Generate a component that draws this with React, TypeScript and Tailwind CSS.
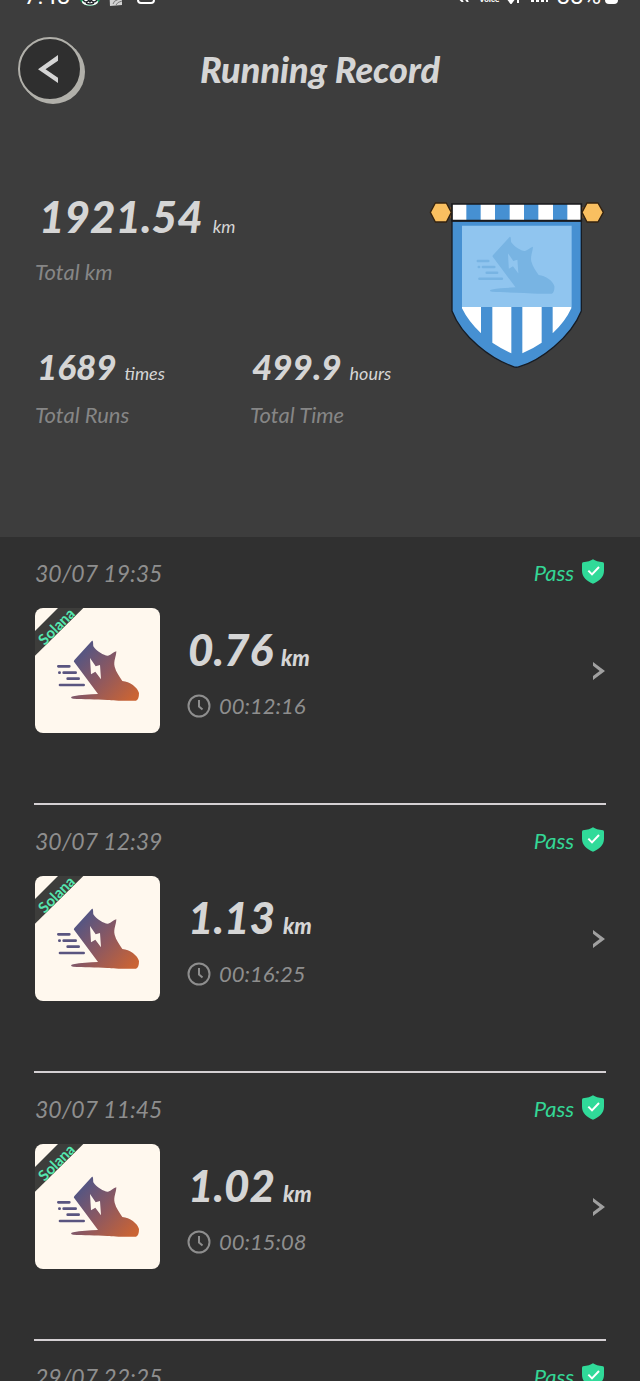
import React from "react";

type Run = { date: string; distance: string; time: string };

const runs: Run[] = [
  { date: "30/07 19:35", distance: "0.76", time: "00:12:16" },
  { date: "30/07 12:39", distance: "1.13", time: "00:16:25" },
  { date: "30/07 11:45", distance: "1.02", time: "00:15:08" },
];

function ShoeShape() {
  return (
    <g>
      <path
        fillRule="evenodd"
        strokeWidth="0"
        d="M171 98C175 97 174 105 175 115C186 131 208 144 219 143C229 141 236 131 244 130C244 145 235 159 239 176C243 192 254 206 262 219C284 221 308 238 312 255C312 268 309 276 303 278C270 279 235 278 217 276C183 274 143 274 115 272C106 271 106 267 115 265C137 259 163 260 189 258L117 161Q115 159 119 155ZM165 150L182 175L195 171L198 214L181 191L168 199Z"
      />
      <path strokeWidth="8" strokeLinecap="round" d="M70 175H103M86 194H122M73 194H74M98 212H131M75 231H146" />
    </g>
  );
}

function ShoeCard({ id }: { id: string }) {
  return (
    <div className="relative h-[125px] w-[125px] shrink-0 overflow-hidden rounded-lg bg-[#fff8ee]">
      <svg viewBox="0 0 375 375" className="h-full w-full" aria-hidden="true">
        <defs>
          <linearGradient id={id} gradientUnits="userSpaceOnUse" x1="125" y1="125" x2="290" y2="275">
            <stop offset="0" stopColor="#4c5588" />
            <stop offset="0.5" stopColor="#8d5860" />
            <stop offset="1" stopColor="#ca6434" />
          </linearGradient>
        </defs>
        <g fill={`url(#${id})`} stroke="#5a5580">
          <ShoeShape />
        </g>
        <path d="M0 69L69 0H145L0 143Z" fill="#3d3d3b" />
      </svg>
      <span className="absolute -left-4 top-1.5 w-[74px] -rotate-45 text-center text-[15px] font-bold not-italic leading-6 text-[#55e8b0]">
        Solana
      </span>
    </div>
  );
}

function Banner() {
  return (
    <svg viewBox="27 39 528 501" className="h-[167px] w-[176px]" role="img" aria-label="Runner pennant">
      <path d="M96 96H484V366C452 446 362 514 298 533Q288 537 278 532C214 510 126 445 96 366Z" fill="#4690d2" stroke="#171c24" strokeWidth="4" />
      <path d="M126 110H455V354H126Z" fill="#90c5ef" />
      <path d="M126 354H183V433Q145 397 126 358ZM217 354H274V493Q244 479 217 461ZM307 354H365V461Q339 479 307 493ZM398 354H454V358Q435 399 398 433Z" fill="#fff" />
      <g transform="translate(107 50) scale(.95)" fill="#78b4e3" stroke="#78b4e3">
        <ShoeShape />
      </g>
      <path d="M90 54H96V88H90ZM484 54H491V88H484Z" fill="#704d25" />
      <path d="M96 45H484V95H96Z" fill="#fff" />
      <path d="M139 45H182V95H139ZM225 45H269V95H225ZM312 45H355V95H312ZM399 45H442V95H399Z" fill="#4690d2" />
      <path d="M96 45H484V95H96Z" fill="none" stroke="#19191b" strokeWidth="5" />
      <path d="M46 42H79L94 70L79 99H46L31 70ZM501 42H534L550 70L534 99H501L486 70Z" fill="#f9bf60" stroke="#33220f" strokeWidth="4" strokeLinejoin="round" />
    </svg>
  );
}

function StatusBar() {
  return (
    <div className="flex h-1.5 items-end justify-between overflow-hidden pl-6 pr-[22px] font-['Roboto'] not-italic text-white" aria-hidden="true">
      <div className="flex items-end">
        <span className="w-[55px] text-2xl leading-5">7:48</span>
        <svg viewBox="0 0 22 22" className="mr-2 h-[22px] w-[22px]">
          <circle cx="11" cy="11" r="11" fill="#1ca765" />
          <ellipse cx="11" cy="18" rx="8" ry="3.5" fill="#fff" />
          <path d="M4 16Q7 20 10 16Q11 20 12 16Q15 20 18 16M7 19Q11 21 15 19" fill="none" stroke="#20252a" strokeWidth="1.4" />
        </svg>
        <svg viewBox="0 0 13 22" className="mr-[15px] h-[22px] w-[13px]">
          <path d="M0 0H13V21L1 22Z" fill="#d2d2d2" />
          <path d="M4 20Q4 17 10 15M7 21Q8 18 13 17" fill="none" stroke="#777" />
        </svg>
        <span className="mb-0.5 h-5 w-[18px] rounded-sm border-2 border-white" />
      </div>
      <div className="flex items-end">
        <svg viewBox="0 0 10 20" className="mb-1 mr-2.5 h-5 w-2.5" fill="none" stroke="#fff" strokeWidth="2">
          <path d="M5 14L0 16L4 20M10 14L6 16L9 20" />
        </svg>
        <span className="mr-2 text-[8px] font-bold leading-3">Voice</span>
        <svg viewBox="0 0 14 20" className="mb-0.5 mr-2.5 h-5 w-3.5" fill="none" stroke="#fff" strokeWidth="2">
          <path d="M4 5V18M1 15L4 19L7 15M11 5V19" />
        </svg>
        <svg viewBox="0 0 17 20" className="mb-1 mr-2 h-5 w-[17px]" fill="#fff">
          <path d="M0 14H3V20H0ZM5 11H8V20H5ZM10 8H13V20H10ZM15 4H17V20H15Z" />
        </svg>
        <span className="mr-1 text-2xl leading-5">88%</span>
        <span className="mb-0.5 h-5 w-[13px] rounded-sm bg-white" />
      </div>
    </div>
  );
}

function Stat({ value, unit, label, large = false }: { value: string; unit: string; label: string; large?: boolean }) {
  return (
    <div>
      <p className={large ? "flex items-baseline gap-2.5 pl-1 text-[#d5d5d5]" : "flex items-baseline gap-2 pl-0.5 text-[#d5d5d5]"}>
        <span className={large ? "text-[44px] font-black leading-[52px]" : "text-[35px] font-black leading-10"}>{value}</span>
        <span className="text-lg">{unit}</span>
      </p>
      <p className={large ? "mt-3.5 text-[22px] leading-8 text-[#868686]" : "mt-3 text-[22px] leading-8 text-[#868686]"}>{label}</p>
    </div>
  );
}

function RunHeading({ date }: { date: string }) {
  return (
    <div className="flex h-[71px] items-start justify-between pl-px pr-0.5 pt-5">
      <time className="text-[23px] leading-8 text-[#8e8e8e]">{date}</time>
      <span className="flex items-start gap-2 text-[22px] leading-8 text-[#34d695]">
        Pass
        <svg viewBox="0 0 66 73" className="mt-0.5 h-[25px] w-[22px]" aria-hidden="true">
          <path d="M33 0Q43 7 63 9Q66 10 66 14V34C66 54 51 65 33 73C15 65 0 54 0 34V14Q0 10 3 9Q23 7 33 0Z" fill="#30da99" />
          <path d="M19 34L30 45L51 23" fill="none" stroke="#fff" strokeWidth="6" />
        </svg>
      </span>
    </div>
  );
}

function RunRow({ run, id }: { run: Run; id: string }) {
  return (
    <li className="h-[268px] border-b-2 border-[#d4d0d3]">
      <RunHeading date={run.date} />
      <a href="#run" className="flex items-center pl-px pr-px">
        <ShoeCard id={id} />
        <div className="ml-[27px] flex-1 pt-1">
          <p className="flex items-baseline gap-2 pl-px text-[#d5d5d5]">
            <span className="text-[44px] font-black leading-[50px]">{run.distance}</span>
            <span className="text-[22px] font-black">km</span>
          </p>
          <p className="mt-4 flex items-center gap-2 text-[22px] leading-8 text-[#8e8e8e]">
            <svg viewBox="0 0 24 24" className="h-6 w-6" fill="none" stroke="#8e8e8e" strokeWidth="2" aria-hidden="true">
              <circle cx="12" cy="12" r="10.5" />
              <path d="M12 6V12.5L15.5 15.5" />
            </svg>
            {run.time}
          </p>
        </div>
        <svg viewBox="0 0 36 54" className="h-[18px] w-3" aria-hidden="true">
          <path d="M0 0L36 27L0 54V42L20 27L0 11Z" fill="#a0a0a0" />
        </svg>
      </a>
    </li>
  );
}

export default function App() {
  return (
    <div className="flex h-screen flex-col overflow-hidden bg-[#303030] font-['Lato','Liberation_Sans',sans-serif]">
      <header className="shrink-0 bg-[#3d3d3d] pb-[106px] italic">
        <StatusBar />
        <div className="mt-[31px] grid grid-cols-[1fr_auto_1fr] items-center px-[18px]">
          <button type="button" aria-label="Back" className="flex h-16 w-16 items-center justify-center rounded-full border-2 border-[#b1b0aa] bg-[#2f2f2f] shadow-[3px_3px_0_#b1b0aa]">
            <svg viewBox="0 0 61 85" className="mr-1 h-7 w-5" aria-hidden="true">
              <path d="M61 0V17L23 43L61 69V85L0 43Z" fill="#d5d5d5" />
            </svg>
          </button>
          <h1 className="text-4xl font-black leading-10 text-[#d5d5d5]">Running Record</h1>
        </div>
        <div className="mt-[89px] flex items-start justify-between pl-[35px] pr-[35px]">
          <div className="flex flex-col gap-[58px]">
            <Stat large value="1921.54" unit="km" label="Total km" />
            <div className="grid grid-cols-[215px_auto]">
              <Stat value="1689" unit="times" label="Total Runs" />
              <Stat value="499.9" unit="hours" label="Total Time" />
            </div>
          </div>
          <div className="mt-3">
            <Banner />
          </div>
        </div>
      </header>
      <main className="flex-1 px-[34px] italic">
        <ul>
          {runs.map((run, i) => (
            <RunRow key={run.date} run={run} id={`shoe-${i}`} />
          ))}
          <li>
            <RunHeading date="29/07 22:25" />
          </li>
        </ul>
      </main>
    </div>
  );
}
